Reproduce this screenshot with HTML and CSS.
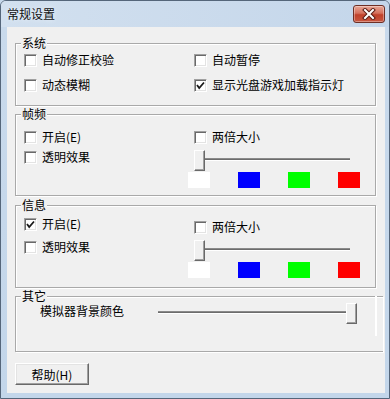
FILE: index.html
```html
<!DOCTYPE html>
<html lang="zh-CN">
<head>
<meta charset="utf-8">
<title>常规设置</title>
<link rel="stylesheet" href="styles.css">
</head>
<body>
<div class="window">
  <div class="titlebar">
    <span class="title">常规设置</span>
    <button class="close" aria-label="关闭">
      <svg width="14" height="12" viewBox="0 0 14 12"><path d="M3 2 L11 10 M11 2 L3 10" stroke="#5a1c14" stroke-width="4" stroke-linecap="square" fill="none"/><path d="M3 2 L11 10 M11 2 L3 10" stroke="#fff" stroke-width="2" stroke-linecap="square" fill="none"/></svg>
    </button>
  </div>
  <div class="client">
    <div class="group sys">
      <span class="legend">系统</span>
      <div class="grid-sys">
        <label class="opt"><span class="cb"></span><span>自动修正校验</span></label>
        <label class="opt"><span class="cb"></span><span>自动暂停</span></label>
        <label class="opt"><span class="cb"></span><span>动态模糊</span></label>
        <label class="opt"><span class="cb checked"><svg width="11" height="11" viewBox="0 0 11 11"><path d="M2 5 L4.2 8 L9 2.5" stroke="#1a1a1a" stroke-width="1.8" fill="none"/></svg></span><span>显示光盘游戏加载指示灯</span></label>
      </div>
    </div>

    <div class="group frm">
      <span class="legend">帧频</span>
      <div class="grid-two">
        <div class="col-left">
          <label class="opt"><span class="cb"></span><span>开启(E)</span></label>
          <label class="opt"><span class="cb"></span><span>透明效果</span></label>
        </div>
        <div class="col-right">
          <label class="opt indent"><span class="cb"></span><span>两倍大小</span></label>
          <div class="slider indent"><span class="thumb"></span><span class="track"></span></div>
          <div class="swatches">
            <span class="sw white"></span><span class="sw blue"></span><span class="sw green"></span><span class="sw red"></span>
          </div>
        </div>
      </div>
    </div>

    <div class="group info">
      <span class="legend">信息</span>
      <div class="grid-two">
        <div class="col-left">
          <label class="opt first"><span class="cb checked"><svg width="11" height="11" viewBox="0 0 11 11"><path d="M2 5 L4.2 8 L9 2.5" stroke="#1a1a1a" stroke-width="1.8" fill="none"/></svg></span><span>开启(E)</span></label>
          <label class="opt"><span class="cb"></span><span>透明效果</span></label>
        </div>
        <div class="col-right">
          <label class="opt indent"><span class="cb"></span><span>两倍大小</span></label>
          <div class="slider indent"><span class="thumb"></span><span class="track"></span></div>
          <div class="swatches">
            <span class="sw white"></span><span class="sw blue"></span><span class="sw green"></span><span class="sw red"></span>
          </div>
        </div>
      </div>
    </div>

    <div class="group other">
      <span class="legend">其它</span>
      <div class="grid-other">
        <span class="other-label">模拟器背景颜色</span>
        <div class="slider wide"><span class="track"></span><span class="thumb"></span></div>
      </div>
    </div>

    <button class="btn">帮助(H)</button>
  </div>
</div>
</body>
</html>
```

FILE: styles.css
```css
* { box-sizing: border-box; }
html, body { margin: 0; padding: 0; background: #c6d8eb; }
body {
  font-family: "Noto Sans CJK SC", "Liberation Sans", sans-serif;
  font-size: 12px;
  color: #000;
}
.window {
  width: 390px;
  height: 399px;
  border: 1px solid #55667a;
  border-radius: 6px 6px 0 0;
  background: linear-gradient(to bottom, #dde8f4 0, #c9daec 26px, #c3d6ea 100%);
  padding: 0 4px 5px 6px;
  display: flex;
  flex-direction: column;
  overflow: hidden;
}
.titlebar {
  height: 26px;
  display: flex;
  align-items: flex-start;
  justify-content: space-between;
  background: linear-gradient(to right, #d2e0ef, #c4d6ea);
  margin: 0 -4px 0 -6px;
  padding: 0 4px 0 6px;
}
.title {
  font-size: 12px;
  line-height: 14px;
  margin-top: 6px;
  color: #111;
  text-shadow: 0 0 4px #eef4fb;
}
.close {
  margin-top: 4px;
  width: 32px;
  height: 18px;
  padding: 0;
  border: 1px solid #6e2f25;
  border-radius: 3px;
  background: linear-gradient(to bottom, #e8a796 0, #d5705c 45%, #c0412a 55%, #c8563f 100%);
  display: flex;
  align-items: center;
  justify-content: center;
  box-shadow: inset 0 0 0 1px rgba(255,255,255,0.35);
}
.close svg { display: block; }
.client {
  flex: 1;
  background: #f0f0f0;
  padding: 16px 9px 0 8px;
}
.group {
  position: relative;
  border: 1px solid #a9a9a9;
  box-shadow: inset 1px 1px 0 #fff, 1px 1px 0 #fff;
}
.legend {
  position: absolute;
  top: -8px;
  left: 5px;
  padding: 0 1px;
  background: #f0f0f0;
  line-height: 14px;
}
.sys { height: 63px; padding: 8px 0 0 8px; }
.frm { height: 82px; margin-top: 8px; padding: 14px 0 0 8px; }
.info { height: 83px; margin-top: 9px; padding: 13px 0 0 8px; }
.other {
  height: 56px;
  margin-top: 8px;
  margin-right: -7px;
  border-right: none;
  padding: 6px 0 0 24px;
}
.other::after {
  content: "";
  position: absolute;
  left: 359px;
  top: -1px;
  width: 1px;
  height: 40px;
  background: #a9a9a9;
  box-shadow: 1px 0 0 #fff, 1px 0 0 #fff inset;
}
.grid-sys {
  display: grid;
  grid-template-columns: 170px 1fr;
  row-gap: 9px;
}
.grid-two {
  display: grid;
  grid-template-columns: 164px 1fr;
}
.col-left { display: flex; flex-direction: column; gap: 4px; }
.info .col-left { gap: 5px; }
.info .col-left .first { margin-top: -3px; margin-bottom: 2px; }
.col-right { display: flex; flex-direction: column; }
.indent { margin-left: 6px; }
.opt {
  display: flex;
  align-items: center;
  gap: 5px;
  height: 16px;
  line-height: 16px;
  white-space: nowrap;
}
.cb {
  width: 13px;
  height: 13px;
  flex: none;
  background: #fff;
  border: 1px solid;
  border-color: #a0a0a0 #fff #fff #a0a0a0;
  box-shadow: inset 1px 1px 0 #696969, inset -1px -1px 0 #e3e3e3;
  display: flex;
  align-items: center;
  justify-content: center;
}
.cb svg { display: block; }
.slider {
  display: flex;
  height: 21px;
  width: 156px;
  margin-top: 5px;
}
.slider.wide { width: 199px; margin-top: 0; }
.thumb {
  width: 11px;
  height: 21px;
  flex: none;
  background: #f0f0f0;
  border: 1px solid;
  border-color: #fff #696969 #696969 #fff;
  box-shadow: inset -1px -1px 0 #a0a0a0;
}
.track {
  flex: 1;
  height: 3px;
  margin-top: 8px;
  border-top: 1px solid #8a8a8a;
  background: #6c6c6c;
  border-bottom: 1px solid #fff;
}
.swatches {
  display: flex;
  gap: 28px;
  margin-top: 1px;
}
.sw { width: 22px; height: 16px; display: block; }
.white { background: #fff; }
.blue { background: #0000ff; }
.green { background: #00ff00; }
.red { background: #ff0000; }
.grid-other {
  display: grid;
  grid-template-columns: 118px 199px;
  align-items: start;
}
.other-label { line-height: 16px; white-space: nowrap; }
.btn {
  margin-top: 11px;
  width: 74px;
  height: 22px;
  padding: 0;
  font-family: inherit;
  font-size: 12px;
  color: #000;
  background: #f0f0f0;
  border: 1px solid;
  border-color: #fff #696969 #696969 #fff;
  box-shadow: inset -1px -1px 0 #a0a0a0, inset 1px 1px 0 #e3e3e3;
  display: block;
}
```
